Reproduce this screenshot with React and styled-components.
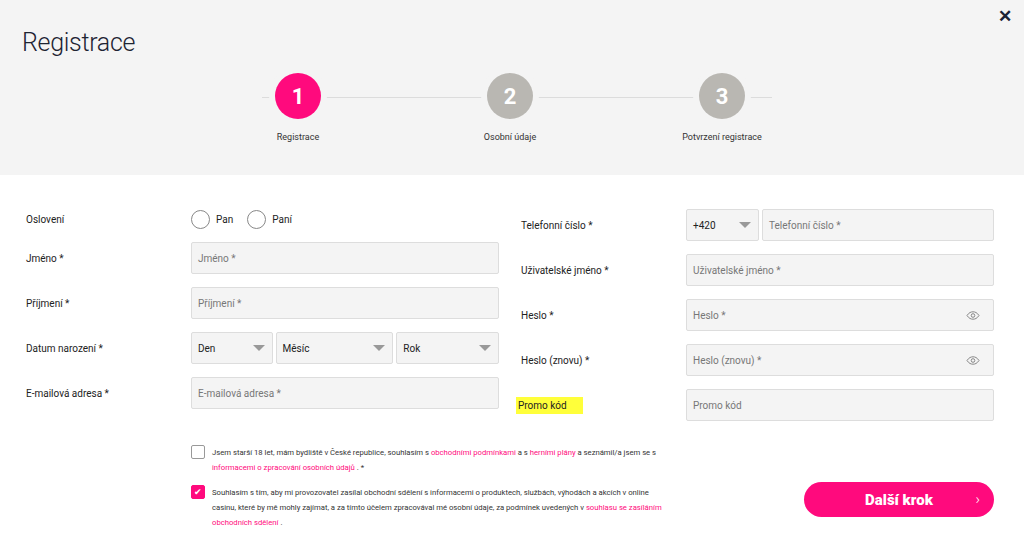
import React from 'react';
import styled, { createGlobalStyle } from 'styled-components';

const Global = createGlobalStyle`
  body { margin: 0; font-family: Roboto, "Liberation Sans", sans-serif; color: #222; background: #fff; }
  * { box-sizing: border-box; }
`;

const PINK = '#ff0a7d';

const Page = styled.div`
  width: 1024px;
  height: 548px;
  overflow: hidden;
`;

const Header = styled.div`
  position: relative;
  background: #f4f4f4;
  height: 175px;
  padding: 28px 22px 0;
`;

const Title = styled.h1`
  margin: 0;
  font-weight: 300;
  font-size: 25px;
  color: #1e2433;
  letter-spacing: -0.3px;
`;

const Close = styled.div`
  position: absolute;
  top: 6px;
  right: 12px;
  font-weight: 700;
  font-size: 17px;
  color: #1b2236;
`;

const Stepper = styled.div`
  position: relative;
  width: 524px;
  margin: 16px 0 0 226px;
  display: flex;
  justify-content: space-between;
  &::before {
    content: '';
    position: absolute;
    left: 14px;
    right: 0;
    top: 24px;
    height: 1px;
    background: #dcdcdc;
  }
`;

const Step = styled.div`
  position: relative;
  width: 100px;
  display: flex;
  flex-direction: column;
  align-items: center;
`;

const Circle = styled.div`
  width: 46px;
  height: 46px;
  border-radius: 50%;
  background: ${p => (p.active ? PINK : '#b9b7b2')};
  color: #fff;
  font-size: 22px;
  font-weight: 700;
  display: flex;
  align-items: center;
  justify-content: center;
  box-shadow: 0 0 0 6px #f4f4f4;
`;

const StepLabel = styled.div`
  margin-top: 13px;
  font-size: 9px;
  color: #333;
`;

const Body = styled.div`
  display: grid;
  grid-template-columns: 473px 1fr;
  column-gap: 22px;
  padding: 34px 30px 0 26px;
`;

const Col = styled.div`
  display: flex;
  flex-direction: column;
  gap: 13px;
`;

const Row = styled.div`
  display: grid;
  grid-template-columns: 165px 1fr;
  align-items: center;
  min-height: ${p => p.h || 32}px;
`;

const Label = styled.span`
  font-size: 10px;
  color: #222;
  justify-self: start;
  ${p => p.mark && `background: #ffff3a; padding: 3px 2px; margin-left: -5px; width: 67px;`}
`;

const Input = styled.div`
  height: 32px;
  background: #f4f4f4;
  border: 1px solid #dddddd;
  border-radius: 2px;
  display: flex;
  align-items: center;
  justify-content: space-between;
  padding: 0 13px 0 6px;
  font-size: 10px;
  color: ${p => (p.dark ? '#222' : '#777')};
  flex: ${p => p.flex || 1};
`;

const Group = styled.div`
  display: flex;
  gap: 3px;
`;

const Caret = styled.span`
  width: 0;
  height: 0;
  border-left: 6px solid transparent;
  border-right: 6px solid transparent;
  border-top: 6px solid #999;
  margin-right: -6px;
`;

const Radios = styled.div`
  display: flex;
  gap: 14px;
  font-size: 10px;
`;

const Radio = styled.label`
  display: flex;
  align-items: center;
  gap: 6px;
  &::before {
    content: '';
    width: 17px;
    height: 17px;
    border: 1px solid #888;
    border-radius: 50%;
    background: #fff;
  }
`;

const Bottom = styled.div`
  display: flex;
  justify-content: space-between;
  align-items: flex-start;
  padding: 24px 30px 0 191px;
`;

const Checks = styled.div`
  display: flex;
  flex-direction: column;
  gap: 10px;
  width: 478px;
`;

const Check = styled.div`
  display: flex;
  gap: 7px;
  font-size: 7.7px;
  line-height: 15px;
  color: #333;
`;

const Box = styled.span`
  flex: none;
  width: 14px;
  height: 14px;
  border-radius: 2px;
  border: 1px solid ${p => (p.on ? PINK : '#999')};
  background: ${p => (p.on ? PINK : '#fff')};
  color: #fff;
  font-size: 9px;
  display: flex;
  align-items: center;
  justify-content: center;
`;

const Link = styled.span`
  color: ${PINK};
`;

const Button = styled.button`
  margin-top: 37px;
  width: 190px;
  height: 35px;
  border: none;
  border-radius: 18px;
  background: ${PINK};
  color: #fff;
  font-family: inherit;
  font-weight: 900;
  font-size: 15px;
  position: relative;
  span {
    position: absolute;
    right: 14px;
    top: 8px;
    font-weight: 300;
  }
`;

const Eye = () => (
  <svg width="14" height="9" viewBox="0 0 14 9" fill="none" stroke="#888" strokeWidth="1">
    <path d="M1 4.5C3 1.5 5 .8 7 .8s4 .7 6 3.7C11 7.5 9 8.2 7 8.2S3 7.5 1 4.5z" />
    <circle cx="7" cy="4.5" r="1.8" />
  </svg>
);

export default function App() {
  return (
    <Page>
      <Global />
      <Header>
        <Close>✕</Close>
        <Title>Registrace</Title>
        <Stepper>
          <Step><Circle active>1</Circle><StepLabel>Registrace</StepLabel></Step>
          <Step><Circle>2</Circle><StepLabel>Osobní údaje</StepLabel></Step>
          <Step><Circle>3</Circle><StepLabel>Potvrzení registrace</StepLabel></Step>
        </Stepper>
      </Header>
      <Body>
        <Col>
          <Row h={20}>
            <Label>Oslovení</Label>
            <Radios><Radio>Pan</Radio><Radio>Paní</Radio></Radios>
          </Row>
          <Row><Label>Jméno *</Label><Input>Jméno *</Input></Row>
          <Row><Label>Příjmení *</Label><Input>Příjmení *</Input></Row>
          <Row>
            <Label>Datum narození *</Label>
            <Group>
              <Input dark>Den<Caret /></Input>
              <Input dark flex={1.6}>Měsíc<Caret /></Input>
              <Input dark flex={1.35}>Rok<Caret /></Input>
            </Group>
          </Row>
          <Row><Label>E-mailová adresa *</Label><Input>E-mailová adresa *</Input></Row>
        </Col>
        <Col>
          <Row>
            <Label>Telefonní číslo *</Label>
            <Group>
              <Input dark style={{ flex: '0 0 73px' }}>+420<Caret /></Input>
              <Input>Telefonní číslo *</Input>
            </Group>
          </Row>
          <Row><Label>Uživatelské jméno *</Label><Input>Uživatelské jméno *</Input></Row>
          <Row><Label>Heslo *</Label><Input>Heslo *<Eye /></Input></Row>
          <Row><Label>Heslo (znovu) *</Label><Input>Heslo (znovu) *<Eye /></Input></Row>
          <Row><Label mark>Promo kód</Label><Input>Promo kód</Input></Row>
        </Col>
      </Body>
      <Bottom>
        <Checks>
          <Check>
            <Box />
            <div>
              Jsem starší 18 let, mám bydliště v České republice, souhlasím s <Link>obchodními podmínkami</Link> a s{' '}
              <Link>herními plány</Link> a seznámil/a jsem se s <Link>informacemi o zpracování osobních údajů</Link> . *
            </div>
          </Check>
          <Check>
            <Box on>✔</Box>
            <div>
              Souhlasím s tím, aby mi provozovatel zasílal obchodní sdělení s informacemi o produktech, službách, výhodách a akcích v online
              casinu, které by mě mohly zajímat, a za tímto účelem zpracovával mé osobní údaje, za podmínek uvedených v{' '}
              <Link>souhlasu se zasíláním obchodních sdělení</Link> .
            </div>
          </Check>
        </Checks>
        <Button>Další krok<span>›</span></Button>
      </Bottom>
    </Page>
  );
}
